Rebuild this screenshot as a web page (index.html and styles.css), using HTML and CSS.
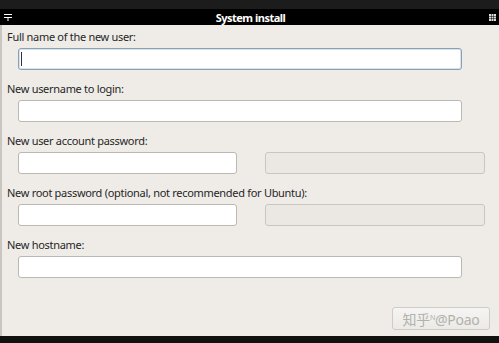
FILE: index.html
```html
<!DOCTYPE html>
<html lang="en">
<head>
    <meta charset="UTF-8">
    <meta name="viewport" content="width=device-width, initial-scale=1.0">
    <title>System install</title>
    <link rel="stylesheet" href="styles.css">
</head>
<body>
    <div class="top-strip"></div>
    <div class="titlebar">
        <svg class="pin" width="8" height="7" viewBox="0 0 8 7">
            <path d="M0 0.5H8M0 3.5H8M4 3.5V7" stroke="#fff" stroke-width="1" fill="none"/>
        </svg>
        <span class="title">System install</span>
        <svg class="grip" width="7" height="7" viewBox="0 0 7 7">
            <rect x="0" y="0" width="2" height="2" fill="#ddd"/>
            <rect x="2.5" y="0" width="2" height="2" fill="#ddd"/>
            <rect x="5" y="0" width="2" height="2" fill="#ddd"/>
            <rect x="0" y="2.5" width="2" height="2" fill="#ddd"/>
            <rect x="2.5" y="2.5" width="2" height="2" fill="#ddd"/>
            <rect x="5" y="2.5" width="2" height="2" fill="#ddd"/>
            <rect x="0" y="5" width="2" height="2" fill="#ddd"/>
            <rect x="2.5" y="5" width="2" height="2" fill="#ddd"/>
            <rect x="5" y="5" width="2" height="2" fill="#ddd"/>
        </svg>
    </div>

    <div class="window">
        <div class="field">
            <label>Full name of the new user:</label>
            <div class="input wide focused"><span class="cursor"></span></div>
        </div>

        <div class="field">
            <label>New username to login:</label>
            <div class="input wide"></div>
        </div>

        <div class="field">
            <label>New user account password:</label>
            <div class="pair">
                <div class="input half"></div>
                <div class="input half disabled"></div>
            </div>
        </div>

        <div class="field">
            <label>New root password (optional, not recommended for Ubuntu):</label>
            <div class="pair">
                <div class="input half"></div>
                <div class="input half disabled"></div>
            </div>
        </div>

        <div class="field">
            <label>New hostname:</label>
            <div class="input wide"></div>
        </div>

        <button class="next" disabled>知乎<small>N</small>@Poao</button>
    </div>
    <div class="bottom-strip"></div>
</body>
</html>
```

FILE: styles.css
```css
body {
    margin: 0;
    width: 499px;
    height: 343px;
    overflow: hidden;
    background-color: #000;
    font-family: "Noto Sans", "Noto Sans CJK SC", sans-serif;
}

.top-strip {
    height: 9px;
    background-color: #1c1c1c;
}

.titlebar {
    height: 16px;
    background-color: #000;
    display: flex;
    align-items: center;
    justify-content: space-between;
    padding: 0 3px 0 4px;
}

.title {
    color: #fff;
    font-weight: bold;
    font-size: 11px;
    letter-spacing: -0.5px;
}

.window {
    height: 311px;
    box-sizing: border-box;
    background-color: #efece8;
    border-left: 2px solid #c9c6c1;
    padding: 5px 0 0 5px;
    display: flex;
    flex-direction: column;
}

.field {
    margin-bottom: 12px;
}

label {
    display: block;
    font-size: 11px;
    line-height: 14px;
    letter-spacing: -0.3px;
    color: #262626;
    margin-bottom: 4px;
}

.input {
    height: 22px;
    box-sizing: border-box;
    background-color: #fff;
    border: 1px solid #bcb9b4;
    border-radius: 3px;
    margin-left: 11px;
    position: relative;
}

.wide {
    width: 444px;
}

.pair {
    display: flex;
    gap: 28px;
}

.half {
    width: 219px;
}

.pair .half + .half {
    margin-left: 0;
    width: 220px;
}

.focused {
    border-color: #8aa0b4;
    box-shadow: inset 0 0 0 1px #d8e2ea;
}

.cursor {
    position: absolute;
    left: 2px;
    top: 3px;
    width: 1px;
    height: 14px;
    background-color: #333;
}

.disabled {
    background-color: #ebe8e3;
    border-color: #c9c6c1;
}

.next {
    margin-top: auto;
    margin-bottom: 6px;
    margin-right: 9px;
    align-self: flex-end;
    width: 98px;
    height: 23px;
    border: 1px solid #cfccc7;
    border-radius: 3px;
    background: linear-gradient(#f6f5f3, #eceae6);
    color: #b3b1ad;
    font-family: "Noto Sans", "Noto Sans CJK SC", sans-serif;
    font-size: 14px;
    letter-spacing: -0.3px;
    padding: 0;
    white-space: nowrap;
}

.next small {
    font-size: 7px;
    vertical-align: 5px;
}

.bottom-strip {
    height: 7px;
    background-color: #111;
}
```
